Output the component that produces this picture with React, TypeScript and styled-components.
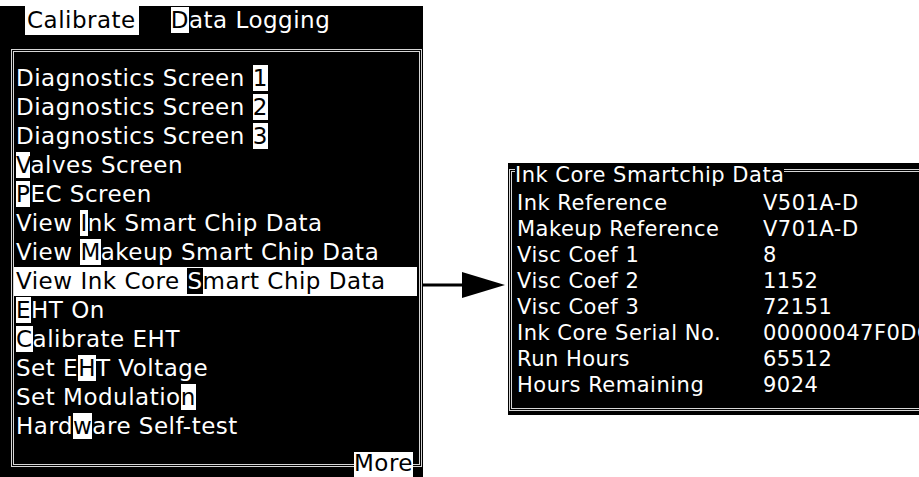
import React from 'react'
import styled, { createGlobalStyle } from 'styled-components'

const GlobalStyle = createGlobalStyle`
  html, body {
    margin: 0;
    padding: 0;
    background: #fff;
    overflow: hidden;
  }
`

const Page = styled.div`
  display: flex;
  align-items: flex-start;
  width: 919px;
  height: 477px;
  overflow: hidden;
  font-family: "DejaVu Sans", sans-serif;
`

const MenuPanel = styled.section`
  flex: none;
  width: 423px;
  height: 474px;
  margin-top: 6px;
  background: #000;
  color: #fff;
  font-size: 23px;
  letter-spacing: 0.5px;
  overflow: hidden;
`

const MenuBar = styled.nav`
  display: flex;
  align-items: flex-start;
  gap: 30px;
  height: 43px;
  padding-left: 25px;
  line-height: 29px;
`

const Tab = styled.span<{ $active?: boolean }>`
  padding: 0 3px 0 2px;
  background: ${(p) => (p.$active ? '#fff' : 'transparent')};
  color: ${(p) => (p.$active ? '#000' : '#fff')};
`

const Frame = styled.div`
  position: relative;
  width: 405px;
  height: 400px;
  margin-left: 11px;
  padding-top: 12px;
  border: 3px double #d6d6d6;
`

const Row = styled.div<{ $selected?: boolean }>`
  margin-right: 2px;
  padding-left: 2px;
  line-height: 29px;
  white-space: nowrap;
  background: ${(p) => (p.$selected ? '#fff' : 'transparent')};
  color: ${(p) => (p.$selected ? '#000' : '#fff')};
`

const Key = styled.span<{ $inverse?: boolean }>`
  background: ${(p) => (p.$inverse ? '#000' : '#fff')};
  color: ${(p) => (p.$inverse ? '#fff' : '#000')};
`

const More = styled.span`
  position: absolute;
  right: 6px;
  bottom: -14px;
  height: 26px;
  background: #fff;
  color: #000;
  line-height: 23px;
`

const Arrow = styled.svg`
  flex: none;
  margin-top: 272px;
`

const DataPanel = styled.section`
  flex: none;
  width: 440px;
  height: 248px;
  margin-top: 163px;
  padding: 0 0 4px 1px;
  background: #000;
  color: #fff;
  font-size: 21px;
  letter-spacing: 0.5px;
`

const DataFrame = styled.fieldset`
  margin: 0;
  min-width: 0;
  padding: 12px 5px 10px;
  border: 3px double #d6d6d6;
  border-right: none;
`

const Title = styled.legend`
  margin-left: -2px;
  padding: 9px 0 0;
  line-height: 6px;
  white-space: nowrap;
`

const DataGrid = styled.dl`
  display: grid;
  grid-template-columns: 246px auto;
  margin: 0;
  line-height: 26px;
  white-space: nowrap;
`

const Label = styled.dt`
  margin: 0;
`

const Value = styled.dd`
  margin: 0;
`

const menuItems = [
  { text: 'Diagnostics Screen 1', key: 19 },
  { text: 'Diagnostics Screen 2', key: 19 },
  { text: 'Diagnostics Screen 3', key: 19 },
  { text: 'Valves Screen', key: 0 },
  { text: 'PEC Screen', key: 0 },
  { text: 'View Ink Smart Chip Data', key: 5 },
  { text: 'View Makeup Smart Chip Data', key: 5 },
  { text: 'View Ink Core Smart Chip Data', key: 14, selected: true },
  { text: 'EHT On', key: 0 },
  { text: 'Calibrate EHT', key: 0 },
  { text: 'Set EHT Voltage', key: 5 },
  { text: 'Set Modulation', key: 13 },
  { text: 'Hardware Self-test', key: 4 },
]

const chipData = [
  ['Ink Reference', 'V501A-D'],
  ['Makeup Reference', 'V701A-D'],
  ['Visc Coef 1', '8'],
  ['Visc Coef 2', '1152'],
  ['Visc Coef 3', '72151'],
  ['Ink Core Serial No.', '00000047F0DC'],
  ['Run Hours', '65512'],
  ['Hours Remaining', '9024'],
]

const withKey = (text: string, i: number, inverse?: boolean) => (
  <>
    {text.slice(0, i)}
    <Key $inverse={inverse}>{text[i]}</Key>
    {text.slice(i + 1)}
  </>
)

const App = () => {
  return (
    <>
      <GlobalStyle />
      <Page>
        <MenuPanel>
          <MenuBar>
            <Tab $active>Calibrate</Tab>
            <Tab>{withKey('Data Logging', 0)}</Tab>
          </MenuBar>
          <Frame>
            {menuItems.map((el) => (
              <Row key={el.text} $selected={el.selected}>
                {withKey(el.text, el.key, el.selected)}
              </Row>
            ))}
            <More>More</More>
          </Frame>
        </MenuPanel>
        <Arrow width="85" height="26" viewBox="0 0 85 26">
          <rect x="0" y="11.5" width="41" height="3" fill="#000" />
          <polygon points="39,0 82,13 39,26" fill="#000" />
        </Arrow>
        <DataPanel>
          <DataFrame>
            <Title>Ink Core Smartchip Data</Title>
            <DataGrid>
              {chipData.map(([label, value]) => (
                <React.Fragment key={label}>
                  <Label>{label}</Label>
                  <Value>{value}</Value>
                </React.Fragment>
              ))}
            </DataGrid>
          </DataFrame>
        </DataPanel>
      </Page>
    </>
  )
}

export default App
